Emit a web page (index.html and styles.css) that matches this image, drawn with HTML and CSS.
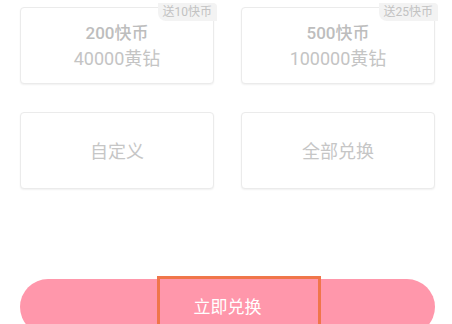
FILE: index.html
```html
<!DOCTYPE html>
<html lang="zh">
<head>
<meta charset="utf-8">
<link rel="stylesheet" href="styles.css">
</head>
<body>
<div class="page">
  <div class="grid">
    <div class="card">
      <span class="badge">送10快币</span>
      <div class="amount">200快币</div>
      <div class="price">40000黄钻</div>
    </div>
    <div class="card">
      <span class="badge">送25快币</span>
      <div class="amount">500快币</div>
      <div class="price">100000黄钻</div>
    </div>
    <div class="card card-plain">
      <div class="label">自定义</div>
    </div>
    <div class="card card-plain">
      <div class="label">全部兑换</div>
    </div>
  </div>
  <div class="action">
    <button class="btn">立即兑换</button>
    <span class="focus-ring"></span>
  </div>
</div>
</body>
</html>
```

FILE: styles.css
```css
html, body {
  margin: 0;
  padding: 0;
  background: #ffffff;
  overflow: hidden;
}
body {
  width: 452px;
  height: 324px;
  font-family: "Roboto", "Noto Sans CJK SC", "Noto Sans", sans-serif;
}
.page {
  padding: 7px 17px 0 20px;
}
.grid {
  display: grid;
  grid-template-columns: 194px 194px;
  column-gap: 27px;
  row-gap: 28px;
}
.card {
  position: relative;
  height: 77px;
  box-sizing: border-box;
  border: 1px solid #ebebeb;
  border-radius: 4px;
  box-shadow: 0 1px 2px rgba(0,0,0,0.06);
  display: flex;
  flex-direction: column;
  align-items: center;
  justify-content: center;
  background: #fff;
}
.badge {
  position: absolute;
  top: -5px;
  right: -4px;
  background: #f3f3f3;
  color: #c2c2c2;
  font-size: 12px;
  line-height: 18px;
  padding: 0 5px;
  border-radius: 0 4px 0 8px;
}
.amount {
  font-size: 17px;
  font-weight: 500;
  color: #bdbdbd;
  line-height: 26px;
}
.price {
  font-size: 18px;
  color: #c4c4c4;
  line-height: 26px;
}
.label {
  font-size: 18px;
  color: #c6c6c6;
  line-height: 26px;
  margin-top: 2px;
}
.action {
  position: relative;
  margin-top: 90px;
}
.btn {
  display: block;
  width: 415px;
  height: 56px;
  border: none;
  border-radius: 28px;
  background: #ff97ab;
  padding: 0 0 4px 0;
  font-family: inherit;
  color: #ffffff;
  font-size: 17px;
  text-align: center;
}
.focus-ring {
  position: absolute;
  left: 137px;
  top: -3px;
  width: 164px;
  height: 60px;
  box-sizing: border-box;
  border: 3px solid #f0764a;
  border-bottom: none;
}
```
